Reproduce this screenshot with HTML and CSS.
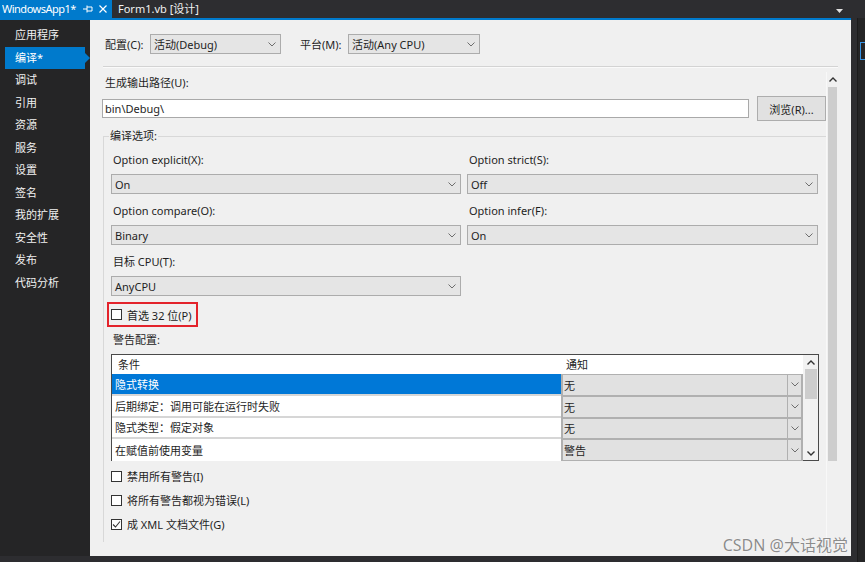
FILE: index.html
```html
<!DOCTYPE html>
<html lang="zh">
<head>
<meta charset="utf-8">
<title>WindowsApp1 - 编译</title>
<link rel="stylesheet" href="styles.css">
</head>
<body>
<div class="window">
  <div class="tabs">
    <div class="tab active">
      <span class="tab-title">WindowsApp1*</span>
      <svg class="pin" width="10" height="10" viewBox="0 0 10 10"><path d="M0 5 H4 M4 1.5 V8.5 M4 3 H9 V7 H4" fill="none" stroke="#fff" stroke-width="1"/></svg>
      <svg class="close" width="8" height="8" viewBox="0 0 8 8"><path d="M0.5 0.5 L7.5 7.5 M7.5 0.5 L0.5 7.5" stroke="#fff" stroke-width="1.2"/></svg>
    </div>
    <div class="tab second">Form1.vb [设计]</div>
    <svg class="tab-menu" width="7" height="4" viewBox="0 0 7 4"><path d="M0 0 H7 L3.5 4 Z" fill="#e0e0e0"/></svg>
  </div>
  <div class="row">
    <div class="work">
      <nav class="side">
        <div class="item">应用程序</div>
        <div class="item sel">编译*</div>
        <div class="item">调试</div>
        <div class="item">引用</div>
        <div class="item">资源</div>
        <div class="item">服务</div>
        <div class="item">设置</div>
        <div class="item">签名</div>
        <div class="item">我的扩展</div>
        <div class="item">安全性</div>
        <div class="item">发布</div>
        <div class="item">代码分析</div>
      </nav>
      <section class="panel">
        <div class="config">
          <span class="cfg-label l1">配置(C):</span>
          <div class="combo w131"><span>活动(Debug)</span><svg class="chev" width="8" height="5" viewBox="0 0 8 5"><path d="M0.5 0.5 L4 4 L7.5 0.5" fill="none" stroke="#6d6d6d"/></svg></div>
          <span class="cfg-label l2">平台(M):</span>
          <div class="combo w132"><span>活动(Any CPU)</span><svg class="chev" width="8" height="5" viewBox="0 0 8 5"><path d="M0.5 0.5 L4 4 L7.5 0.5" fill="none" stroke="#6d6d6d"/></svg></div>
        </div>
        <div class="sep"></div>
        <div class="scroll">
          <div class="content">
            <div class="lbl out-lbl">生成输出路径(U):</div>
            <div class="path-row">
              <div class="textbox">bin\Debug\</div>
              <div class="button">浏览(R)...</div>
            </div>
            <fieldset class="group">
              <legend>编译选项:</legend>
              <div class="opts">
                <div class="opt">
                  <div class="lbl">Option explicit(X):</div>
                  <div class="combo"><span>On</span><svg class="chev" width="8" height="5" viewBox="0 0 8 5"><path d="M0.5 0.5 L4 4 L7.5 0.5" fill="none" stroke="#6d6d6d"/></svg></div>
                </div>
                <div class="opt">
                  <div class="lbl">Option strict(S):</div>
                  <div class="combo"><span>Off</span><svg class="chev" width="8" height="5" viewBox="0 0 8 5"><path d="M0.5 0.5 L4 4 L7.5 0.5" fill="none" stroke="#6d6d6d"/></svg></div>
                </div>
                <div class="opt">
                  <div class="lbl">Option compare(O):</div>
                  <div class="combo"><span>Binary</span><svg class="chev" width="8" height="5" viewBox="0 0 8 5"><path d="M0.5 0.5 L4 4 L7.5 0.5" fill="none" stroke="#6d6d6d"/></svg></div>
                </div>
                <div class="opt">
                  <div class="lbl">Option infer(F):</div>
                  <div class="combo"><span>On</span><svg class="chev" width="8" height="5" viewBox="0 0 8 5"><path d="M0.5 0.5 L4 4 L7.5 0.5" fill="none" stroke="#6d6d6d"/></svg></div>
                </div>
                <div class="opt">
                  <div class="lbl">目标 CPU(T):</div>
                  <div class="combo"><span>AnyCPU</span><svg class="chev" width="8" height="5" viewBox="0 0 8 5"><path d="M0.5 0.5 L4 4 L7.5 0.5" fill="none" stroke="#6d6d6d"/></svg></div>
                </div>
              </div>
              <div class="highlight">
                <span class="cb"></span><span>首选 32 位(P)</span>
              </div>
              <div class="lbl warn-lbl">警告配置:</div>
              <div class="table">
                <div class="grid">
                  <div class="th">条件</div>
                  <div class="th th2">通知</div>
                  <div class="td sel">隐式转换</div>
                  <div class="tc"><span>无</span><span class="arrow"><svg class="chev" width="8" height="5" viewBox="0 0 8 5"><path d="M0.5 0.5 L4 4 L7.5 0.5" fill="none" stroke="#6d6d6d"/></svg></span></div>
                  <div class="td">后期绑定：调用可能在运行时失败</div>
                  <div class="tc"><span>无</span><span class="arrow"><svg class="chev" width="8" height="5" viewBox="0 0 8 5"><path d="M0.5 0.5 L4 4 L7.5 0.5" fill="none" stroke="#6d6d6d"/></svg></span></div>
                  <div class="td">隐式类型：假定对象</div>
                  <div class="tc"><span>无</span><span class="arrow"><svg class="chev" width="8" height="5" viewBox="0 0 8 5"><path d="M0.5 0.5 L4 4 L7.5 0.5" fill="none" stroke="#6d6d6d"/></svg></span></div>
                  <div class="td last">在赋值前使用变量</div>
                  <div class="tc last"><span>警告</span><span class="arrow"><svg class="chev" width="8" height="5" viewBox="0 0 8 5"><path d="M0.5 0.5 L4 4 L7.5 0.5" fill="none" stroke="#6d6d6d"/></svg></span></div>
                </div>
                <div class="tscroll">
                  <div class="sarrow"><svg width="8" height="5" viewBox="0 0 8 5"><path d="M0.5 4.5 L4 1 L7.5 4.5" fill="none" stroke="#333" stroke-width="1.4"/></svg></div>
                  <div class="tthumb"></div>
                  <div class="fill"></div>
                  <div class="sarrow"><svg width="8" height="5" viewBox="0 0 8 5"><path d="M0.5 0.5 L4 4 L7.5 0.5" fill="none" stroke="#333" stroke-width="1.4"/></svg></div>
                </div>
              </div>
              <div class="checks">
                <div class="check"><span class="cb"></span><span>禁用所有警告(I)</span></div>
                <div class="check"><span class="cb"></span><span>将所有警告都视为错误(L)</span></div>
                <div class="check"><span class="cb"><svg width="9" height="9" viewBox="0 0 9 9"><path d="M1 4.5 L3.5 7 L8 1.5" fill="none" stroke="#333" stroke-width="1.1"/></svg></span><span>成 XML 文档文件(G)</span></div>
              </div>
            </fieldset>
          </div>
          <div class="vscroll">
            <div class="sarrow up"><svg width="8" height="5" viewBox="0 0 8 5"><path d="M0.5 4.5 L4 1 L7.5 4.5" fill="none" stroke="#333" stroke-width="1.4"/></svg></div>
            <div class="thumb"></div>
          </div>
        </div>
      </section>
    </div>
    <div class="edge">
      <div class="edge-inner"><div class="edge-box"></div></div>
    </div>
  </div>
  <div class="watermark">CSDN @大话视觉</div>
</div>
</body>
</html>
```
FILE: styles.css
```css
* { box-sizing: border-box; }
html, body { margin: 0; padding: 0; }
body {
  width: 865px;
  height: 562px;
  overflow: hidden;
  background: #2d2d30;
  font-family: "Segoe UI", "Noto Sans", "Noto Sans CJK SC", sans-serif;
  font-size: 11px;
  color: #1e1e1e;
}
.window {
  position: relative;
  width: 865px;
  height: 562px;
  display: flex;
  flex-direction: column;
}
.tabs {
  height: 18px;
  display: flex;
  align-items: stretch;
  color: #f1f1f1;
  flex: none;
}
.tab {
  display: flex;
  align-items: center;
  white-space: nowrap;
  line-height: 18px;
}
.tab.active {
  background: #007acc;
  width: 112px;
  padding-left: 2px;
  color: #fff;
}
.tab-title {
  flex: 1;
  letter-spacing: -0.5px;
  overflow: hidden;
}
.pin { margin-right: 6px; }
.close { margin-right: 5px; }
.tab.second { padding-left: 6px; }
.tab-menu { margin: 9px 22px 0 auto; }

.row {
  flex: 1;
  display: flex;
  min-height: 0;
}
.work {
  width: 853px;
  display: flex;
  border-top: 2px solid #007acc;
  padding-bottom: 6px;
}
.side {
  width: 90px;
  flex: none;
  background: #252526;
  padding-top: 4px;
  color: #f1f1f1;
}
.item {
  height: 22.5px;
  line-height: 22.5px;
  padding-left: 15px;
  white-space: nowrap;
}
.item.sel {
  position: relative;
  background: #007acc;
  margin-left: 5px;
  width: 80px;
  padding-left: 10px;
  height: 22px;
  line-height: 22px;
  margin-bottom: 0.5px;
  color: #fff;
}
.item.sel::after {
  content: "";
  position: absolute;
  left: 100%;
  top: 50%;
  margin-top: -5px;
  border-left: 5px solid #007acc;
  border-top: 5px solid transparent;
  border-bottom: 5px solid transparent;
}
.panel {
  flex: 1;
  background: #f0f0f0;
  display: flex;
  flex-direction: column;
  min-width: 0;
}
.config {
  display: flex;
  align-items: center;
  height: 20px;
  margin-top: 14px;
  padding-left: 15px;
  flex: none;
}
.cfg-label { white-space: nowrap; }
.cfg-label.l1 { width: 45px; }
.cfg-label.l2 { width: 48px; margin-left: 19px; }
.combo {
  height: 20px;
  background: #e5e5e5;
  border: 1px solid #acacac;
  display: flex;
  align-items: center;
  justify-content: space-between;
  padding: 0 4px 0 3px;
  white-space: nowrap;
}
.w131 { width: 131px; }
.w132 { width: 132px; }
.chev { flex: none; }
.sep {
  margin: 12px 13px 0 13px;
  height: 2px;
  border-top: 1px solid #d3d3d3;
  border-bottom: 1px solid #fafafa;
  flex: none;
}
.scroll {
  flex: 1;
  display: flex;
  min-height: 0;
  margin-right: 13px;
}
.content {
  flex: 1;
  padding-left: 12px;
  overflow: hidden;
  min-width: 0;
}
.lbl {
  line-height: 20px;
  padding-left: 2px;
  white-space: nowrap;
}
.out-lbl { margin-top: 5px; padding-left: 3px; }
.path-row {
  display: flex;
  align-items: center;
  gap: 8px;
  height: 25px;
  margin-top: 3px;
}
.textbox {
  width: 647px;
  height: 19px;
  background: #fff;
  border: 1px solid #a9a9a9;
  line-height: 17px;
  padding-left: 2px;
}
.button {
  width: 69px;
  height: 25px;
  background: #e1e1e1;
  border: 1px solid #adadad;
  display: flex;
  align-items: center;
  justify-content: center;
}
.group {
  margin: 8px 0 0 1px;
  padding: 7px 0 6px 7px;
  border: 1px solid #d8d8d8;
  border-right: none;
  border-bottom: none;
  min-width: 0;
}
.group legend {
  padding: 0 1px;
  margin-left: -2px;
  line-height: 14px;
}
.opts {
  display: grid;
  grid-template-columns: 350px 351px;
  column-gap: 6px;
  row-gap: 7px;
}
.opt .combo { margin-top: 4px; }
.highlight {
  margin: 6px 0 0 -4px;
  width: 91px;
  height: 25px;
  border: 2px solid #e3232b;
  display: flex;
  align-items: center;
  gap: 5px;
  padding-left: 2px;
  white-space: nowrap;
}
.cb {
  width: 11px;
  height: 11px;
  border: 1px solid #333;
  background: #fff;
  flex: none;
  display: flex;
  align-items: center;
  justify-content: center;
}
.warn-lbl { margin-top: 3px; }
.table {
  margin-top: 4px;
  width: 708px;
  height: 107px;
  border: 1px solid #4a4a4a;
  display: flex;
}
.grid {
  width: 691px;
  display: grid;
  grid-template-columns: 449px 242px;
  grid-template-rows: 19px repeat(4, 21.75px);
  background: #fff;
}
.th {
  line-height: 19px;
  padding-left: 6px;
  background: #fff;
}
.th2 { padding-left: 5px; }
.td {
  display: flex;
  align-items: center;
  padding-left: 3px;
  border-bottom: 2px solid #d6d6d6;
  background: #fff;
  white-space: nowrap;
}
.td.sel { background: #0078d7; color: #fff; }
.td.last { border-bottom: none; }
.tc {
  display: flex;
  align-items: center;
  background: #e1e1e1;
  border: 2px solid #b0b0b0;
  border-top-width: 1px;
  border-bottom-width: 1px;
  padding-left: 1px;
}
.tc span:first-child { flex: 1; }
.tc .arrow {
  width: 14px;
  height: 100%;
  border-left: 1px solid #b0b0b0;
  display: flex;
  align-items: center;
  justify-content: center;
}
.tscroll {
  width: 15px;
  background: #f2f2f2;
  display: flex;
  flex-direction: column;
  align-items: center;
}
.sarrow {
  height: 14px;
  width: 100%;
  display: flex;
  align-items: center;
  justify-content: center;
}
.tthumb {
  width: 12px;
  height: 30px;
  background: #cdcdcd;
}
.fill { flex: 1; }
.checks { margin-top: 3px; }
.check {
  height: 24px;
  display: flex;
  align-items: center;
  gap: 5px;
  white-space: nowrap;
}
.vscroll {
  width: 12px;
  flex: none;
  margin-top: 4px;
  display: flex;
  flex-direction: column;
  align-items: center;
  border-left: 1px solid #f8f8f8;
}
.vscroll .sarrow { height: 15px; }
.thumb {
  width: 9px;
  height: 374px;
  background: #cdcdcd;
}
.edge {
  flex: 1;
  padding-left: 6px;
}
.edge-inner {
  height: 100%;
  background: #252526;
  border-left: 1px solid #1b1b1b;
  padding-top: 24px;
  padding-left: 2px;
}
.edge-box {
  width: 6px;
  height: 18px;
  border: 1px solid #3794e6;
  border-right: none;
}
.watermark {
  position: absolute;
  right: 17px;
  top: 533px;
  font-family: "Noto Sans", "Noto Sans CJK SC", sans-serif;
  font-size: 16px;
  line-height: 24px;
  color: #8c8c8c;
  text-shadow: 0 0 1px #fff, 0 0 1px #fff;
  white-space: nowrap;
}
```
